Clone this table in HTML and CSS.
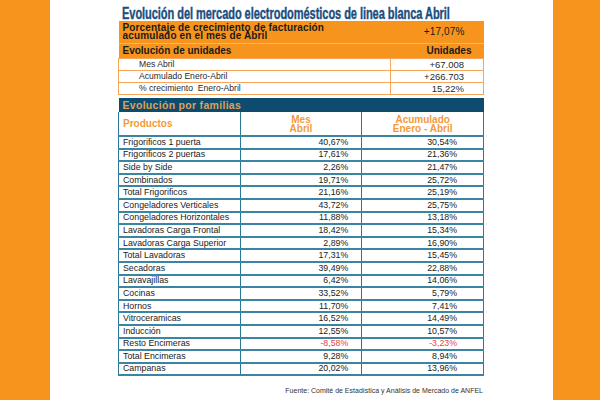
FILE: index.html
```html
<!DOCTYPE html>
<html lang="es">
<head>
<meta charset="utf-8">
<link rel="stylesheet" href="styles.css">
</head>
<body>
<div class="page">
  <div class="sheet">
    <h1 class="title"><span class="title-text">Evolución del mercado electrodomésticos de linea blanca Abril</span></h1>
    <table class="summary">
      <tr class="hl tall">
        <td class="lbl">Porcentaje de crecimiento de facturación<br>acumulado en el mes de Abril</td>
        <td class="val plain">+17,07%</td>
      </tr>
      <tr class="hl sub">
        <td class="lbl">Evolución de unidades</td>
        <td class="val strong">Unidades</td>
      </tr>
      <tr class="wr"><td class="ind">Mes Abril</td><td class="num">+67.008</td></tr>
      <tr class="wr"><td class="ind">Acumulado Enero-Abril</td><td class="num">+266.703</td></tr>
      <tr class="wr"><td class="ind">% crecimiento&nbsp; Enero-Abril</td><td class="num">15,22%</td></tr>
    </table>

    <table class="families">
      <tr class="bar"><td colspan="3">Evolución por familias</td></tr>
      <tr class="head">
        <td class="prod">Productos</td>
        <td class="ctr">Mes<br>Abril</td>
        <td class="ctr">Acumulado<br>Enero - Abril</td>
      </tr>
      <tr><td>Frigorificos 1 puerta</td><td class="m">40,67%</td><td class="a">30,54%</td></tr>
      <tr><td>Frigorificos 2 puertas</td><td class="m">17,61%</td><td class="a">21,36%</td></tr>
      <tr><td>Side by Side</td><td class="m">2,26%</td><td class="a">21,47%</td></tr>
      <tr><td>Combinados</td><td class="m">19,71%</td><td class="a">25,72%</td></tr>
      <tr><td>Total Frigorificos</td><td class="m">21,16%</td><td class="a">25,19%</td></tr>
      <tr><td>Congeladores Verticales</td><td class="m">43,72%</td><td class="a">25,75%</td></tr>
      <tr><td>Congeladores Horizontales</td><td class="m">11,88%</td><td class="a">13,18%</td></tr>
      <tr><td>Lavadoras Carga Frontal</td><td class="m">18,42%</td><td class="a">15,34%</td></tr>
      <tr><td>Lavadoras Carga Superior</td><td class="m">2,89%</td><td class="a">16,90%</td></tr>
      <tr><td>Total Lavadoras</td><td class="m">17,31%</td><td class="a">15,45%</td></tr>
      <tr><td>Secadoras</td><td class="m">39,49%</td><td class="a">22,88%</td></tr>
      <tr><td>Lavavajillas</td><td class="m">6,42%</td><td class="a">14,06%</td></tr>
      <tr><td>Cocinas</td><td class="m">33,52%</td><td class="a">5,79%</td></tr>
      <tr><td>Hornos</td><td class="m">11,70%</td><td class="a">7,41%</td></tr>
      <tr><td>Vitroceramicas</td><td class="m">16,52%</td><td class="a">14,49%</td></tr>
      <tr><td>Inducción</td><td class="m">12,55%</td><td class="a">10,57%</td></tr>
      <tr><td>Resto Encimeras</td><td class="m neg">-8,58%</td><td class="a neg">-3,23%</td></tr>
      <tr><td>Total Encimeras</td><td class="m">9,28%</td><td class="a">8,94%</td></tr>
      <tr><td>Campanas</td><td class="m">20,02%</td><td class="a">13,96%</td></tr>
    </table>

    <p class="source">Fuente: Comité de Estadística y Análisis de Mercado de ANFEL</p>
  </div>
</div>
</body>
</html>
```

FILE: styles.css
```css
html, body {
  margin: 0;
  padding: 0;
}
body {
  width: 600px;
  height: 400px;
  background: #f7941e;
  overflow: hidden;
  font-family: "Liberation Sans", Arial, sans-serif;
  color: #1d1d1d;
}
.page {
  margin-left: 50px;
  width: 503px;
  height: 400px;
  background: #ffffff;
  box-sizing: border-box;
  padding: 6px 0 0 68px;
}
.sheet {
  width: 366px;
}
.title {
  margin: 0 0 0 4px;
  height: 15px;
  line-height: 15px;
  font-size: 17px;
  font-weight: bold;
  color: #1b4e7e;
  white-space: nowrap;
}
.title-text {
  display: inline-block;
  transform: scaleX(0.65);
  transform-origin: 0 50%;
  letter-spacing: -0.1px;
  -webkit-text-stroke: 0.4px #1b4e7e;
}
table {
  border-collapse: collapse;
  width: 366px;
  table-layout: fixed;
}
td {
  padding: 0;
  white-space: nowrap;
}

/* summary block */
.summary td:first-child { width: 268px; }
.summary .hl td {
  background: #f7941e;
  color: #1a1a1a;
}
.summary .hl .lbl {
  font-weight: bold;
  padding-left: 4px;
}
.summary .tall td {
  height: 22px;
  font-size: 10px;
  line-height: 8.5px;
  letter-spacing: 0.15px;
}
.summary .sub td {
  height: 14px;
  line-height: 14px;
  font-size: 10px;
  border-top: 1px solid #fbb66a;
}
.summary .val {
  text-align: right;
  padding-right: 19px;
}
.summary .plain {
  font-weight: normal;
  font-size: 9.3px;
  letter-spacing: 0;
}
.summary .strong {
  font-weight: bold;
  padding-right: 12px;
}
.summary .wr td {
  height: 11px;
  line-height: 11px;
  border: 1px solid #f6a55a;
  background: #fff;
  font-size: 8.6px;
  color: #2a2a2a;
}
.summary .wr .ind { padding-left: 20px; }
.summary .wr .num {
  text-align: right;
  padding-right: 19px;
  font-size: 9.5px;
}

/* families block */
.families {
  margin-top: 3px;
  font-size: 8.8px;
  color: #222;
}
.families td:first-child { width: 199px; }
.families td:nth-child(2) { width: 69px; }
.families tr { height: 12.6px; }
.families td {
  border-left: 1px solid #2a7898;
  border-right: 1px solid #2a7898;
  border-bottom: 2px solid #3a85a4;
  line-height: 9px;
}
.families td:first-child { padding-left: 4px; }
.families .bar { height: 14px; }
.families .bar td {
  background: #0e4c6f;
  color: #dfa158;
  font-weight: bold;
  font-size: 10.5px;
  letter-spacing: 0.3px;
  line-height: 14px;
  padding-left: 4px;
  border: 0;
}
.families .head { height: 24px; }
.families .head td {
  color: #f39a3a;
  font-weight: bold;
  font-size: 10px;
  line-height: 9px;
}
.families .ctr { text-align: center; }
.families .m {
  text-align: right;
  padding-right: 13px;
}
.families .a {
  text-align: right;
  padding-right: 26px;
}
.families .neg { color: #e6424d; }

.source {
  margin: 11px 0 0 0;
  text-align: right;
  font-size: 7px;
  color: #333;
  padding-right: 1px;
}
```
